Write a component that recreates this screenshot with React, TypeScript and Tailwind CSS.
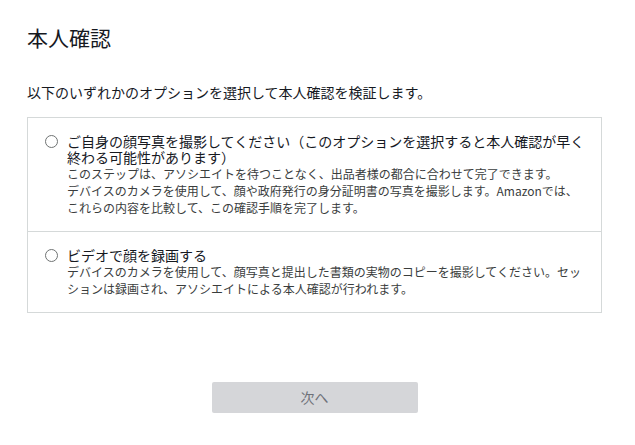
import React, { useState } from 'react';

type Option = {
  id: string;
  title: string;
  lines: string[];
};

const options: Option[] = [
  {
    id: 'photo',
    title: 'ご自身の顔写真を撮影してください（このオプションを選択すると本人確認が早く終わる可能性があります）',
    lines: [
      'このステップは、アソシエイトを待つことなく、出品者様の都合に合わせて完了できます。',
      'デバイスのカメラを使用して、顔や政府発行の身分証明書の写真を撮影します。Amazonでは、これらの内容を比較して、この確認手順を完了します。',
    ],
  },
  {
    id: 'video',
    title: 'ビデオで顔を録画する',
    lines: [
      'デバイスのカメラを使用して、顔写真と提出した書類の実物のコピーを撮影してください。セッションは録画され、アソシエイトによる本人確認が行われます。',
    ],
  },
];

export default function App() {
  const [selected, setSelected] = useState<string | null>(null);

  return (
    <div
      className="w-[635px] h-[445px] bg-white pl-[27px] pr-[33px] pt-[23px] flex flex-col"
      style={{ fontFamily: '"Noto Sans CJK JP", "Noto Sans", sans-serif' }}
    >
      <h1 className="text-[21px] leading-[28px] font-normal text-[#16191f]">本人確認</h1>
      <p className="mt-[31px] text-[14px] leading-[20px] text-[#16191f]">
        以下のいずれかのオプションを選択して本人確認を検証します。
      </p>

      <div className="mt-[15px] border border-[#d5d9d9] flex flex-col">
        {options.map((opt, i) => (
          <label
            key={opt.id}
            className={`flex items-start pl-[17px] pr-[12px] py-[15px] cursor-pointer ${
              i > 0 ? 'border-t border-[#d5d9d9]' : ''
            }`}
            onClick={() => setSelected(opt.id)}
          >
            <span className="mt-[1.5px] w-[13px] h-[13px] shrink-0 rounded-full border border-[#6f7373] flex items-center justify-center">
              {selected === opt.id && <span className="w-[7px] h-[7px] rounded-full bg-[#0f1111]" />}
            </span>
            <div className="ml-[9px] flex-1">
              <div className="text-[14px] leading-[16px] text-[#16191f]">{opt.title}</div>
              <div className="text-[12px] leading-[17px] text-[#3a3d3d]">
                {opt.lines.map((l) => (
                  <div key={l}>{l}</div>
                ))}
              </div>
            </div>
          </label>
        ))}
      </div>

      <div className="mt-[69px] flex justify-center">
        <button
          disabled={!selected}
          className="w-[206px] h-[31px] rounded-[2px] bg-[#d5d6d9] text-[14px] text-[#6e7178]"
        >
          次へ
        </button>
      </div>
    </div>
  );
}
